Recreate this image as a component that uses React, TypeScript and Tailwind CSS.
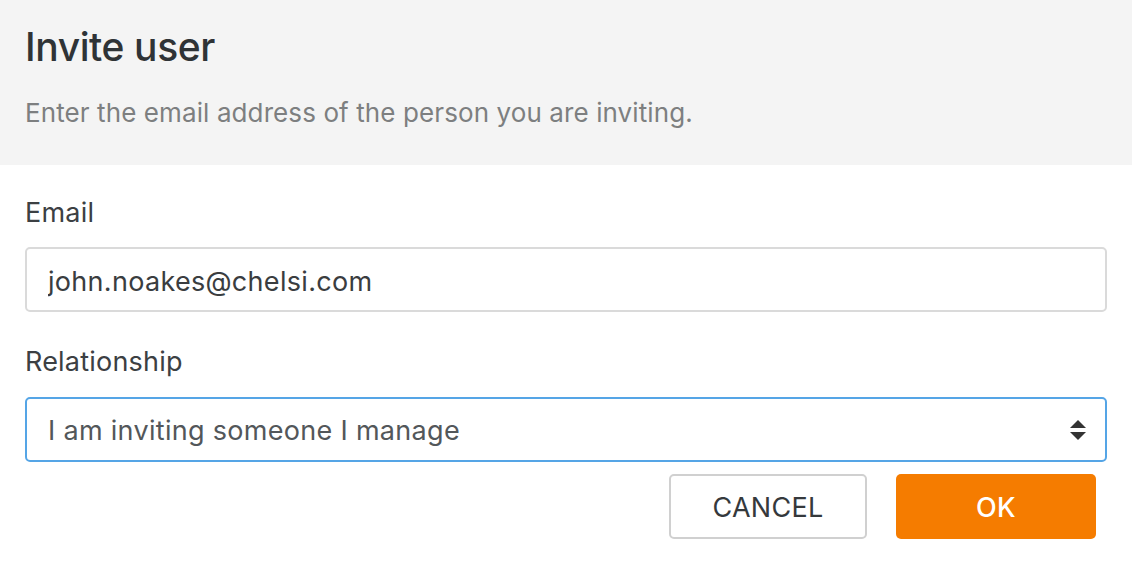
import { useState } from 'react';

export default function App() {
  const [email, setEmail] = useState('john.noakes@chelsi.com');
  const [relationship, setRelationship] = useState('manage');

  return (
    <div className="w-[1132px] h-[574px] bg-white font-['Inter',sans-serif] text-[#35393c]">
      {/* Header */}
      <div className="h-[165px] bg-[#f4f4f4] px-[25px] pt-[23px]">
        <h1 className="text-[39px] leading-[48px] font-medium text-[#2f3336] tracking-[-0.4px]">Invite user</h1>
        <p className="mt-[27px] text-[26px] leading-[30px] text-[#7d7f80] tracking-[0.1px]">
          Enter the email address of the person you are inviting.
        </p>
      </div>

      {/* Form */}
      <div className="px-[25px] pt-[32px]">
        <label className="block text-[27px] leading-[32px] text-[#3c4043] tracking-[0.2px]">Email</label>
        <input
          value={email}
          onChange={(e) => setEmail(e.target.value)}
          className="mt-[18px] block w-full h-[65px] px-[21px] pt-[3px] rounded-[5px] border-2 border-[#dadada] text-[27px] tracking-[0.3px] text-[#3a3d40] outline-none"
        />

        <label className="block mt-[34px] text-[27px] leading-[32px] text-[#3c4043] tracking-[0.2px]">Relationship</label>
        <div className="relative mt-[19px]">
          <select
            value={relationship}
            onChange={(e) => setRelationship(e.target.value)}
            className="block w-full h-[65px] px-[21px] pt-[3px] rounded-[5px] border-2 border-[#55a5e6] bg-white text-[27px] tracking-[0.3px] text-[#53575a] appearance-none outline-none"
          >
            <option value="manage">I am inviting someone I manage</option>
            <option value="manager">I am inviting my manager</option>
          </select>
          <svg className="absolute right-[21px] top-[23px] w-[16px] h-[20px] pointer-events-none" viewBox="0 0 16 20">
            <path d="M8 0 L16 8 H0 Z" fill="#333" />
            <path d="M8 20 L16 12 H0 Z" fill="#333" />
          </svg>
        </div>

        <div className="flex justify-end gap-[29px] mt-[12px] pr-[11px]">
          <button className="w-[198px] h-[65px] pt-[4px] rounded-[5px] border-2 border-[#d0d0d0] bg-white text-[27px] tracking-[0.3px] text-[#35393c]">
            CANCEL
          </button>
          <button className="w-[200px] h-[65px] pt-[4px] rounded-[5px] bg-[#f57c00] text-[27px] tracking-[0.3px] font-medium text-white">
            OK
          </button>
        </div>
      </div>
    </div>
  );
}
